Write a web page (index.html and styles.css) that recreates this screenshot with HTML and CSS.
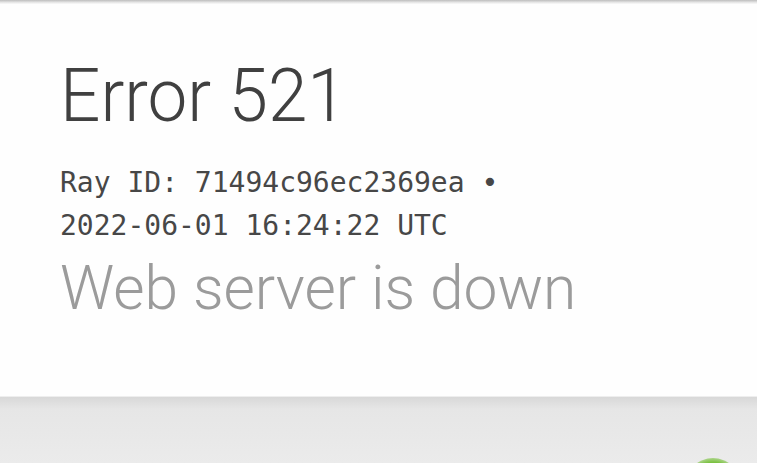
FILE: index.html
```html
<!DOCTYPE html>
<html lang="en">
<head>
<meta charset="utf-8">
<title>Error 521</title>
<link rel="stylesheet" href="styles.css">
</head>
<body>
<div class="topbar"></div>
<main class="card">
  <h1 class="code">Error 521</h1>
  <div class="meta">
    <div>Ray ID: 71494c96ec2369ea •</div>
    <div>2022-06-01 16:24:22 UTC</div>
  </div>
  <h2 class="msg">Web server is down</h2>
</main>
<section class="lower">
  <div class="status"></div>
</section>
</body>
</html>
```
FILE: styles.css
```css
html, body {
  margin: 0;
  padding: 0;
  height: 100%;
  overflow: hidden;
}
body {
  background: #e9e9e9;
  font-family: Roboto, "Noto Sans", sans-serif;
  display: flex;
  flex-direction: column;
}
.topbar {
  height: 4px;
  background: linear-gradient(#bdbdbd, #e6e6e6 60%, #fafafa);
  flex: none;
}
.card {
  background: #fefefe;
  height: 392px;
  box-sizing: border-box;
  padding: 57px 0 0 60px;
  flex: none;
}
.code {
  margin: 0;
  font-weight: 300;
  font-size: 71px;
  line-height: 71px;
  color: #404040;
  transform: scaleY(1.04);
  transform-origin: 0 100%;
}
.meta {
  margin-top: 29px;
  font-family: "DejaVu Sans Mono", monospace;
  font-size: 28px;
  line-height: 43px;
  color: #474747;
}
.msg {
  margin: 12px 0 0 0;
  font-weight: 300;
  font-size: 60.5px;
  line-height: 60px;
  color: #9b9b9b;
}
.lower {
  flex: 1;
  min-height: 0;
  overflow: hidden;
  background: linear-gradient(#d8d8d8, #e6e6e6 12px, #ebebeb);
  border-top: 1px solid #eeeeee;
  display: flex;
  justify-content: flex-end;
  align-items: flex-start;
  padding-right: 16px;
}
.status {
  width: 56px;
  height: 56px;
  border-radius: 50%;
  margin-top: 61px;
  background: radial-gradient(circle at 50% 50%, #7cc242 60%, rgba(124,194,66,0.4) 75%, rgba(233,233,233,0) 100%);
  flex: none;
}
```
